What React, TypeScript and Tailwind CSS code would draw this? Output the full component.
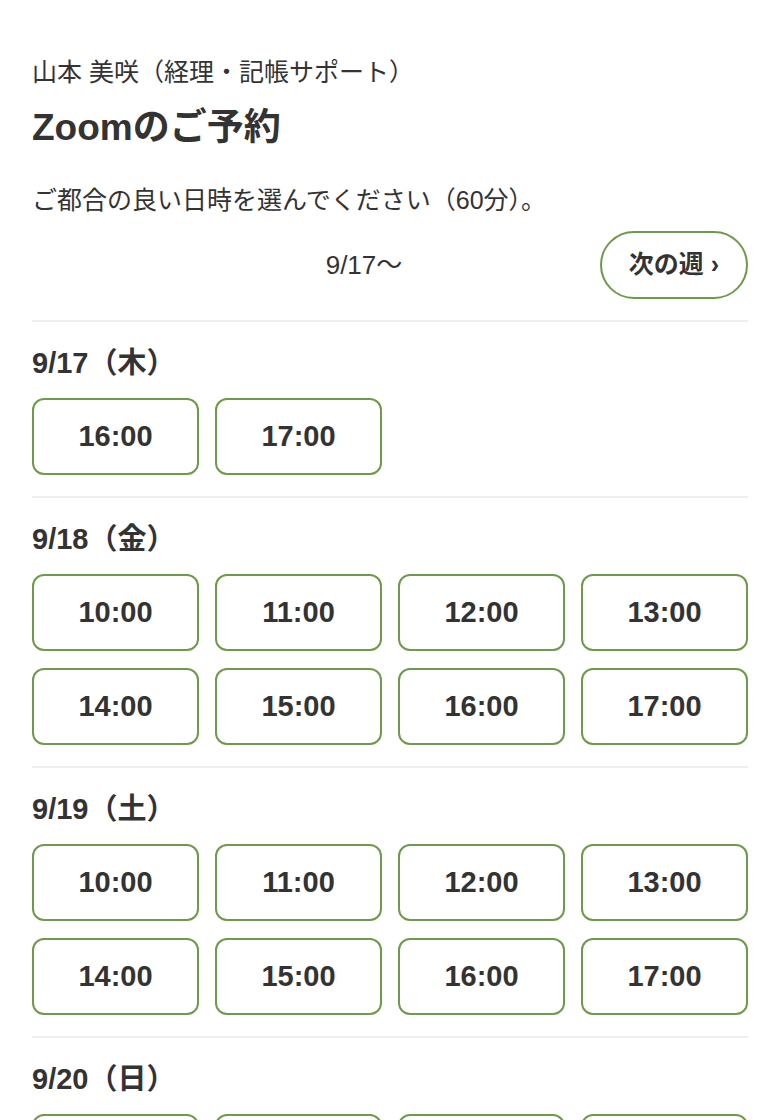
import React from "react";

const days: { label: string; times: string[] }[] = [
  { label: "9/17（木）", times: ["16:00", "17:00"] },
  { label: "9/18（金）", times: ["10:00", "11:00", "12:00", "13:00", "14:00", "15:00", "16:00", "17:00"] },
  { label: "9/19（土）", times: ["10:00", "11:00", "12:00", "13:00", "14:00", "15:00", "16:00", "17:00"] },
  { label: "9/20（日）", times: ["10:00", "11:00", "12:00", "13:00", "14:00", "15:00", "16:00", "17:00"] },
];

const font = { fontFamily: '"Liberation Sans", Arial, "Noto Sans CJK JP", sans-serif' };

export default function App() {
  return (
    <div className="min-h-screen bg-white text-[#333333]" style={font}>
      <div className="px-8 pt-[54px] pb-10">
        <div className="text-[25px] leading-[36px]">山本 美咲（経理・記帳サポート）</div>
        <h1 className="mt-3 text-[37px] leading-[52px] font-bold">Zoomのご予約</h1>
        <p className="mt-[28px] text-[25px] leading-[36px]">ご都合の良い日時を選んでください（60分）。</p>
        <div className="mt-[13px] flex h-[68px] items-center justify-between">
          <div className="w-[96px]" />
          <div className="text-[26px] leading-[36px]">9/17〜</div>
          <button className="h-[68px] w-[148px] rounded-full border-2 border-[#6f9a4b] bg-white text-[25px] font-bold text-[#333333]">
            次の週 ›
          </button>
        </div>
        <div className="mt-[21px]">
          {days.map((d) => (
            <section key={d.label} className="border-t-2 border-[#eeeeee] pt-5 pb-[21px]">
              <h2 className="text-[29px] leading-[42px] font-bold">{d.label}</h2>
              <div className="mt-[14px] grid grid-cols-4 gap-x-4 gap-y-[17px]">
                {d.times.map((t, i) => (
                  <button
                    key={i}
                    className="h-[77px] rounded-[12px] border-2 border-[#6f9a4b] bg-white text-[29px] font-bold text-[#333333]"
                  >
                    {t}
                  </button>
                ))}
              </div>
            </section>
          ))}
        </div>
      </div>
    </div>
  );
}
